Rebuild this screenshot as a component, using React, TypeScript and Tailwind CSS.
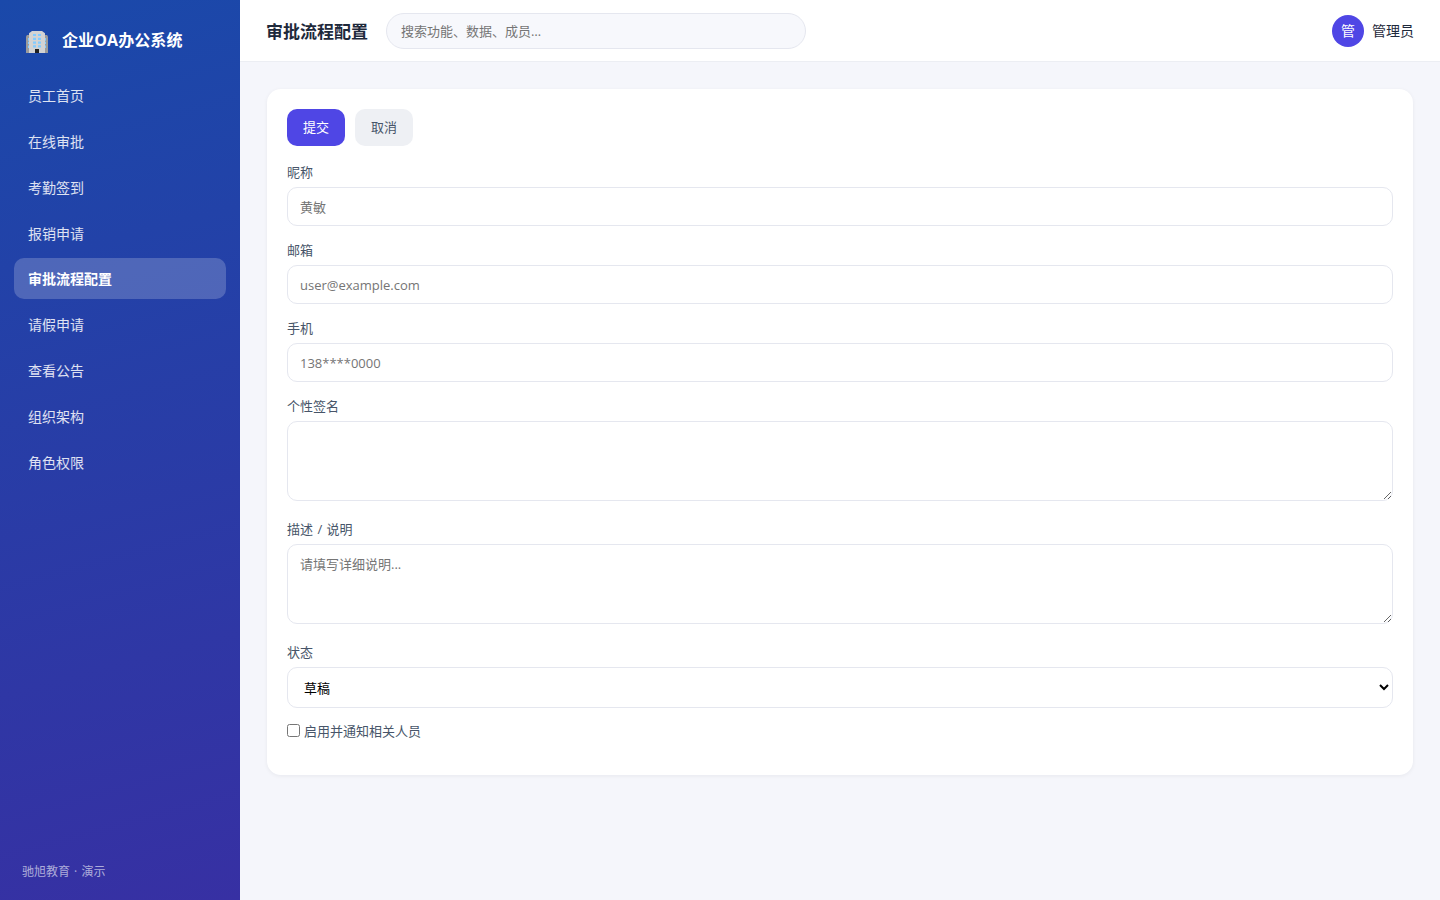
import { clsx } from "clsx";

const MENU = [
  "员工首页",
  "在线审批",
  "考勤签到",
  "报销申请",
  "审批流程配置",
  "请假申请",
  "查看公告",
  "组织架构",
  "角色权限",
];

const ACTIVE = "审批流程配置";

const FIELD =
  "block w-full rounded-[10px] border border-[#e5e7ef] bg-white px-3 text-[13px] placeholder:text-[#757575] outline-none";

function BuildingIcon() {
  return (
    <svg width="22" height="22" viewBox="0 0 22 22" className="mt-0.5 shrink-0">
      <path d="M0 5.5 1 4h20l1 1.5V22H0z" fill="#9b9b9b" />
      <path d="M2 7h18v2.7H2zM2 10.7h18v2.3H2zM2 14.5h18v2.4H2z" fill="#83cbff" />
      <path d="M3 2.2 6 0h10l3 2.2V22H3z" fill="#d3d3d3" />
      <path
        d="M7 3h3v2H7zM12 3h3v2h-3zM7 6.7h3V9H7zM12 6.7h3V9h-3zM7 10.4h3v2.3H7zM12 10.4h3v2.3h-3zM7 14.2h3v2.3H7zM12 14.2h3v2.3h-3z"
        fill="#83cbff"
      />
      <path d="M9 18h4v4H9z" fill="#212121" />
    </svg>
  );
}

function Sidebar() {
  return (
    <aside className="flex w-60 shrink-0 flex-col bg-[linear-gradient(165deg,#1a49aa_0%,#3730a3_100%)] px-3.5">
      <div className="flex h-[74px] items-center gap-3.5 pt-2 pl-3 text-white">
        <BuildingIcon />
        <span className="pb-0.5 text-[16px] font-bold tracking-[0.1px] whitespace-nowrap">
          企业OA办公系统
        </span>
      </div>
      <nav className="flex flex-col gap-[4.8px] pt-[1.2px]">
        {MENU.map((item) => (
          <a
            key={item}
            className={clsx(
              "flex h-[41px] items-center rounded-[10px] px-3.5 text-[14px]",
              item === ACTIVE
                ? "bg-white/20 font-bold text-white"
                : "text-white/85"
            )}
          >
            {item}
          </a>
        ))}
      </nav>
      <div className="mt-auto pb-[18px] pl-2 text-[12px] leading-5 text-white/60 [word-spacing:1px]">
        驰旭教育 · 演示
      </div>
    </aside>
  );
}

function Header() {
  return (
    <header className="flex h-[62px] shrink-0 items-center border-b border-[#eceef3] bg-white px-[26px]">
      <h1 className="pt-0.5 text-[17px] font-bold whitespace-nowrap">审批流程配置</h1>
      <input
        placeholder="搜索功能、数据、成员…"
        className="ml-[18px] h-9 w-[420px] rounded-full border border-[#e5e7ef] bg-[#f7f8fc] px-3.5 text-[13px] outline-none placeholder:text-[#757575]"
      />
      <div className="ml-auto flex items-center gap-2 text-[14px]">
        <span className="flex size-8 items-center justify-center rounded-full bg-[#4f46e5] text-[14px] text-white">
          管
        </span>
        管理员
      </div>
    </header>
  );
}

function Label({ children }: { children: string }) {
  return (
    <label className="mb-[5px] block text-[13px] leading-5 text-[#475569] [word-spacing:1px]">
      {children}
    </label>
  );
}

export default function App() {
  return (
    <div className="flex h-screen overflow-hidden bg-[#f5f6fb] font-['Open_Sans','Noto_Sans_CJK_SC',sans-serif] text-[#1e293b]">
      <Sidebar />
      <div className="flex min-w-0 flex-1 flex-col">
        <Header />
        <main className="px-[27px] pt-[27px]">
          <section className="rounded-[14px] bg-white px-5 pt-5 pb-[19px] shadow-[0_1px_4px_rgba(15,23,42,0.06)]">
            <div className="mb-4 flex gap-2.5">
              <button className="h-[37px] w-[58px] rounded-[10px] bg-[#4f46e5] text-[13px] text-white">
                提交
              </button>
              <button className="h-[37px] w-[58px] rounded-[10px] bg-[#eef0f4] text-[13px] text-[#475569]">
                取消
              </button>
            </div>
            <div className="mb-3.5">
              <Label>昵称</Label>
              <input className={clsx(FIELD, "h-[39px]")} placeholder="黄敏" />
            </div>
            <div className="mb-3.5">
              <Label>邮箱</Label>
              <input className={clsx(FIELD, "h-[39px]")} placeholder="user@example.com" />
            </div>
            <div className="mb-3.5">
              <Label>手机</Label>
              <input className={clsx(FIELD, "h-[39px]")} placeholder="138****0000" />
            </div>
            <div className="mb-[18px]">
              <Label>个性签名</Label>
              <textarea className={clsx(FIELD, "h-20 py-2.5")} />
            </div>
            <div className="mb-[18px]">
              <Label>描述 / 说明</Label>
              <textarea
                className={clsx(FIELD, "h-20 py-2.5 leading-[18px]")}
                placeholder="请填写详细说明..."
              />
            </div>
            <div className="mb-3.5">
              <Label>状态</Label>
              <select className={clsx(FIELD, "h-[41px] text-black")}>
                <option>草稿</option>
                <option>已提交</option>
              </select>
            </div>
            <label className="mb-3.5 flex h-5 items-center gap-1 text-[13px] text-[#475569]">
              <input type="checkbox" className="mb-[3px] size-[13px]" />
              启用并通知相关人员
            </label>
          </section>
        </main>
      </div>
    </div>
  );
}
